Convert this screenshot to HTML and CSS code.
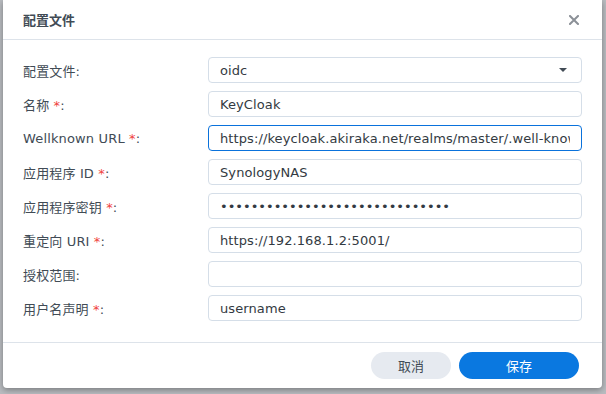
FILE: index.html
```html
<!DOCTYPE html>
<html lang="zh-CN">

<head>
    <meta charset="UTF-8">
    <meta name="viewport" content="width=device-width, initial-scale=1.0">
    <title>配置文件</title>
    <link rel="stylesheet" href="styles.css">
</head>

<body>
    <div class="dialog">
        <!-- Header -->
        <div class="dialog-header">
            <span class="dialog-title">配置文件</span>
            <span class="dialog-close" aria-label="关闭">
                <svg width="10" height="10" viewBox="0 0 10 10">
                    <path d="M1 1 L9 9 M9 1 L1 9" stroke="#8b9097" stroke-width="2" stroke-linecap="square" fill="none"/>
                </svg>
            </span>
        </div>

        <!-- Form -->
        <div class="dialog-body">
            <div class="form-row">
                <label class="form-label">配置文件:</label>
                <div class="field select">
                    <span>oidc</span>
                    <span class="caret"></span>
                </div>
            </div>
            <div class="form-row">
                <label class="form-label">名称 <em>*</em>:</label>
                <input class="field" type="text" value="KeyCloak">
            </div>
            <div class="form-row">
                <label class="form-label">Wellknown URL <em>*</em>:</label>
                <input class="field focused" type="text" value="https://keycloak.akiraka.net/realms/master/.well-known/openid-configuration">
            </div>
            <div class="form-row">
                <label class="form-label">应用程序 ID <em>*</em>:</label>
                <input class="field" type="text" value="SynologyNAS">
            </div>
            <div class="form-row">
                <label class="form-label">应用程序密钥 <em>*</em>:</label>
                <input class="field secret" type="password" value="xxxxxxxxxxxxxxxxxxxxxxxxxxxxxx">
            </div>
            <div class="form-row">
                <label class="form-label">重定向 URI <em>*</em>:</label>
                <input class="field" type="text" value="https://192.168.1.2:5001/">
            </div>
            <div class="form-row">
                <label class="form-label">授权范围:</label>
                <input class="field" type="text" value="">
            </div>
            <div class="form-row">
                <label class="form-label">用户名声明 <em>*</em>:</label>
                <input class="field" type="text" value="username">
            </div>
        </div>

        <!-- Footer -->
        <div class="dialog-footer">
            <button class="btn btn-cancel">取消</button>
            <button class="btn btn-primary">保存</button>
        </div>
    </div>
</body>

</html>
```

FILE: styles.css
```css
html {
    height: 100%;
}

body {
    margin: 0;
    height: 100%;
    background-color: #b9bcc0;
    font-family: "DejaVu Sans", "Noto Sans CJK SC", sans-serif;
    font-size: 13px;
    color: #414b55;
    overflow: hidden;
}

/* Dialog box */
.dialog {
    margin-left: 3px;
    width: 599px;
    height: 388px;
    background-color: #ffffff;
    border-radius: 0 0 4px 4px;
    box-shadow: 0 2px 6px rgba(0, 0, 0, 0.35);
    display: flex;
    flex-direction: column;
}

.dialog-header {
    height: 39px;
    border-bottom: 1px solid #dde3ea;
    display: flex;
    align-items: center;
    justify-content: space-between;
    padding: 0 23px 0 20px;
}

.dialog-title {
    font-family: "Noto Sans CJK SC", sans-serif;
    font-size: 13px;
    font-weight: bold;
    color: #414b55;
}

.dialog-close {
    display: flex;
}

.dialog-body {
    flex: 1;
    padding: 17px 20px 0 20px;
    display: flex;
    flex-direction: column;
    gap: 8px;
}

/* Form rows */
.form-row {
    display: flex;
    align-items: center;
    height: 26px;
}

.form-label {
    width: 185px;
    flex-shrink: 0;
    color: #414b55;
    letter-spacing: 0.15px;
}

.form-label em {
    font-style: normal;
    color: #f0423c;
}

.field {
    box-sizing: border-box;
    flex: 1;
    height: 26px;
    margin: 0;
    padding: 0 11px;
    border: 1px solid #d5dee8;
    border-radius: 4px;
    background-color: #ffffff;
    font-family: "DejaVu Sans", "Noto Sans CJK SC", sans-serif;
    font-size: 13px;
    letter-spacing: 0.1px;
    color: #333a42;
    outline: none;
}

.field.focused {
    border-color: #0a72dc;
}

.field.secret {
    letter-spacing: 0;
}

.select {
    display: flex;
    align-items: center;
    justify-content: space-between;
}

.caret {
    width: 0;
    height: 0;
    margin-right: 3px;
    border-left: 4px solid transparent;
    border-right: 4px solid transparent;
    border-top: 4px solid #414b55;
}

/* Footer buttons */
.dialog-footer {
    height: 45px;
    border-top: 1px solid #dde3ea;
    display: flex;
    justify-content: flex-end;
    align-items: center;
    gap: 8px;
    padding: 0 23px 0 0;
}

.btn {
    height: 27px;
    border: none;
    border-radius: 14px;
    font-family: "Noto Sans CJK SC", sans-serif;
    font-size: 13px;
}

.btn-cancel {
    width: 80px;
    background-color: #e6eaf0;
    color: #414b55;
}

.btn-primary {
    width: 120px;
    background-color: #0a78e0;
    color: #ffffff;
}
```
